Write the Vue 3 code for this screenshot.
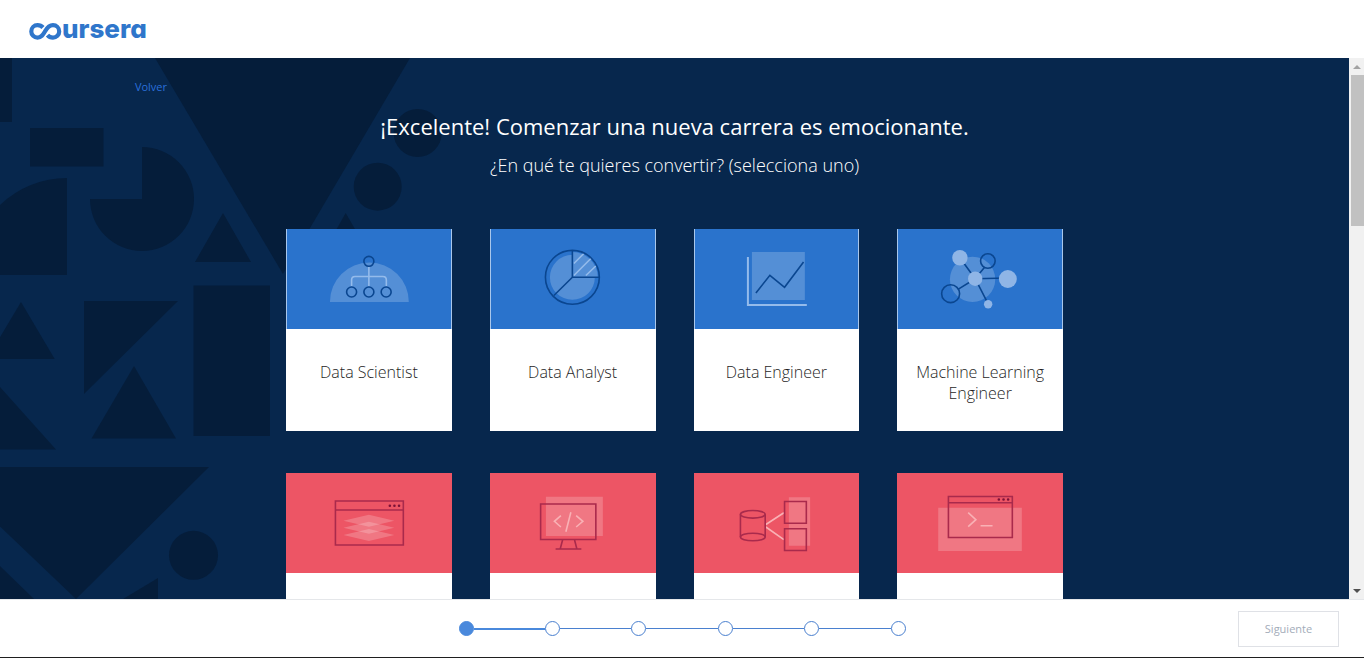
<script setup>
const roles = [
  { name: 'Data Scientist', icon: 'scientist', tone: 'blue' },
  { name: 'Data Analyst', icon: 'analyst', tone: 'blue' },
  { name: 'Data Engineer', icon: 'engineer', tone: 'blue' },
  { name: 'Machine Learning Engineer', icon: 'ml', tone: 'blue' },
  { name: '', icon: 'layers', tone: 'red' },
  { name: '', icon: 'code', tone: 'red' },
  { name: '', icon: 'database', tone: 'red' },
  { name: '', icon: 'terminal', tone: 'red' },
]
const steps = [1, 2, 3, 4, 5, 6]
</script>

<template>
  <div class="page">
    <header class="header">
      <a class="logo" href="#">
        <svg class="logo-mark" viewBox="0 0 33 17" width="33" height="17" aria-hidden="true">
          <path d="M14 4.500C12.400 2.700 10.600 2.200 8.500 2.200a6.200 6.200 0 0 0 0 12.400c4 0 5.500-2.700 7.500-6.200s3.800-6.200 8-6.200a6.200 6.200 0 0 1 0 12.400c-2.400 0-4.200-.900-5.500-2.500" />
        </svg>
        <span class="logo-text">ursera</span>
      </a>
    </header>

    <div class="body">
      <main class="scroller">
        <svg class="shapes" viewBox="0 0 460 541" width="460" height="541" aria-hidden="true">
          <rect x="0" y="0" width="12" height="64" />
          <rect x="30" y="70" width="73.500" height="38.500" />
          <path d="M0 217V147A97 97 0 0 1 67 120V217Z" />
          <path d="M142 141V89A52 52 0 1 1 90 141Z" />
          <path d="M155 0H410L283 216Z" />
          <circle cx="417.700" cy="75" r="24" />
          <circle cx="377.700" cy="128.700" r="24" />
          <path d="M223 155L251 204H195Z" />
          <path d="M345.700 155L374 204H318Z" />
          <path d="M21 244L54.700 301H-13Z" />
          <path d="M84 243H178L84 336Z" />
          <path d="M134 308L176 380.500H91.500Z" />
          <rect x="193.500" y="227.500" width="76.500" height="150.500" />
          <path d="M0 329L56 391.500H0Z" />
          <path d="M0 409H209L76 541L0 468.500Z" />
          <path d="M0 508L34 541H0Z" />
          <circle cx="193.500" cy="497.300" r="24.500" />
          <path d="M158 520V541H123Z" />
        </svg>

        <a class="back" href="#">Volver</a>
        <h1 class="title">¡Excelente! Comenzar una nueva carrera es emocionante.</h1>
        <p class="subtitle">¿En qué te quieres convertir? (selecciona uno)</p>

        <div class="grid">
          <button v-for="role in roles" :key="role.icon" type="button" class="card" :class="role.tone" :aria-label="role.name || role.icon">
            <svg class="art" viewBox="0 0 166 100" aria-hidden="true">
              <g v-if="role.icon === 'scientist'">
                <path class="pale" d="M44 73a39.500 39.500 0 0 1 79 0Z" />
                <path class="light" d="M83 38V57M65.700 57V51q0-3.500 3.500-3.500H97q3.500 0 3.500 3.500V57" />
                <circle class="line" cx="83" cy="32.300" r="5" />
                <circle class="line" cx="65.700" cy="63" r="5" />
                <circle class="line" cx="83" cy="63" r="5" />
                <circle class="line" cx="100.300" cy="63" r="5" />
              </g>
              <g v-else-if="role.icon === 'analyst'">
                <path class="pale" d="M82.500 48.300V23A25.500 25.500 0 0 1 108 48.300H105A22.500 22.500 0 1 1 82.500 25.800Z" />
                <path class="light" d="M84 34.500L94 24.500M84 46.500L101 29.500M96 46.500L106 37" />
                <circle class="line" cx="82.500" cy="48.300" r="27" />
                <path class="line" d="M82.500 21.300V48.300H109.500M82.500 48.300L64 66.500" />
              </g>
              <g v-else-if="role.icon === 'engineer'">
                <path class="pale" d="M58 23H111V71H58Z" />
                <path class="light thick" d="M54 28V76H113" />
                <path class="line" d="M62 64L76 46.300L90.700 58.300L109.700 33" />
              </g>
              <g v-else-if="role.icon === 'ml'">
                <circle class="pale" cx="75.700" cy="50.300" r="22.700" />
                <path class="line" d="M78.300 49.700L63 28.700M78.300 49.700L87.500 38.500M78.300 49.700L111 49M78.300 49.700L61.500 60.200M78.300 49.700L91.300 75" />
                <circle class="line" cx="91" cy="32" r="7.300" />
                <circle class="line" cx="53.700" cy="64.700" r="9" />
                <circle class="dot" cx="63" cy="28.700" r="7.700" />
                <circle class="dot" cx="78.300" cy="49.700" r="7.200" />
                <circle class="dot" cx="111" cy="50" r="9" />
                <circle class="dot" cx="91.300" cy="75.300" r="4.200" />
              </g>
              <g v-else-if="role.icon === 'layers'">
                <path class="pale" d="M57.500 47.700L83 41.700L108.500 47.700L83 53.700Z" />
                <path class="pale" d="M57.500 54.700L83 48.700L108.500 54.700L83 60.700Z" />
                <path class="pale" d="M57.500 62L83 56L108.500 62L83 68Z" />
                <path class="line" d="M49.500 28H117.500V72H49.500ZM49.500 37H117.500" />
                <path class="dots" d="M104 32.700h.01M108.600 32.700h.01M113.200 32.700h.01" />
              </g>
              <g v-else-if="role.icon === 'code'">
                <path class="pale" d="M56 23.700H113V63H56Z" />
                <path class="line" d="M50.700 31H106V66.500H50.700ZM72.700 67L70.300 76M84.700 67L87 76M65.700 76H91.500" />
                <path class="light" d="M71 42.700L64.500 48.300L71 54M81 39.300L76 58.700M86.300 42.700L93 48.300L86.300 54" />
              </g>
              <g v-else-if="role.icon === 'database'">
                <path class="pale" d="M95 24.300H116.300V72.700H95Z" />
                <path class="light" d="M72 51.500L90 39.700M72 54L90 66.700" />
                <path class="line" d="M90.700 28.500H112.500V50.300H90.700ZM90.700 55.700H112.500V77.500H90.700ZM46.500 41.300V64M71.300 41.300V64" />
                <ellipse class="line" cx="58.900" cy="41.300" rx="12.400" ry="3.800" />
                <ellipse class="line" cx="58.900" cy="64" rx="12.400" ry="3.800" />
              </g>
              <g v-else>
                <path class="pale" d="M41.300 34.700H125V78H41.300Z" />
                <path class="line" d="M51.500 23.500H115.500V64.500H51.500ZM51.500 29.700H115.500" />
                <path class="dots" d="M102 26.500h.01M106.700 26.500h.01M111.300 26.500h.01" />
                <path class="light" d="M71.300 39.700L79 46.700L71.300 53.700M83.700 52.800H95.700" />
              </g>
            </svg>
            <span class="card-name">{{ role.name }}</span>
          </button>
        </div>
      </main>

      <div class="scrollbar" aria-hidden="true">
        <svg class="arrow up" viewBox="0 0 15 17"><path d="M4 11L8 7L12 11Z" /></svg>
        <div class="thumb"></div>
        <svg class="arrow down" viewBox="0 0 15 17"><path d="M4 7L8 11L12 7Z" /></svg>
      </div>
    </div>

    <footer class="footer">
      <ol class="steps" aria-label="Progreso">
        <li v-for="step in steps" :key="step" class="step" :class="{ current: step === 1 }"></li>
      </ol>
      <button class="next" type="button" disabled>Siguiente</button>
    </footer>
  </div>
</template>

<style>
body {
  margin: 0;
}
</style>

<style scoped>
.page {
  display: flex;
  flex-direction: column;
  height: 100vh;
  box-sizing: border-box;
  border-bottom: 1px solid #1f1f1f;
  background: #fff;
  font-family: 'Open Sans', 'Noto Sans', sans-serif;
}
.header {
  display: flex;
  align-items: center;
  flex: none;
  height: 58px;
  padding: 0 29px;
}
.logo {
  display: flex;
  align-items: center;
  color: #2f76cb;
  text-decoration: none;
}
.logo-mark {
  flex: none;
  margin-top: 4px;
  fill: none;
  stroke: currentColor;
  stroke-width: 4.200;
}
.logo-text {
  font: 800 26px/30px Inter, Lato, sans-serif;
  font-feature-settings: 'cv11';
}
.body {
  display: flex;
  flex: 1;
  min-height: 0;
}
.scroller {
  position: relative;
  flex: 1;
  overflow: hidden;
  background: #07274d;
  color: #fff;
}
.shapes {
  position: absolute;
  top: 0;
  left: 0;
  fill: #051d3a;
}
.back {
  position: relative;
  display: block;
  width: max-content;
  margin: 20px 0 0 10%;
  font-size: 11px;
  line-height: 18px;
  color: #2a6fdb;
  text-decoration: none;
}
.title,
.subtitle {
  position: relative;
  margin: 0;
  text-align: center;
}
.title {
  margin-top: 15px;
  font-size: 22px;
  font-weight: 400;
  line-height: 30px;
}
.subtitle {
  margin-top: 12px;
  font-size: 18px;
  font-weight: 300;
  line-height: 24px;
}
.grid {
  position: relative;
  display: grid;
  grid-template-columns: repeat(4, 1fr);
  gap: 42px 38px;
  max-width: 777px;
  margin: 52px auto 0;
}
.card {
  display: flex;
  flex-direction: column;
  height: 202px;
  padding: 0;
  border: 0;
  background: #fff;
  font-family: inherit;
  color: #1f1f1f;
}
.art {
  display: block;
  flex: none;
  width: 100%;
  height: 100px;
  fill: none;
  stroke-width: 1.600;
}
.blue .art {
  background: #2a73cc;
  box-shadow: inset 1px 0 #a9c7eb, inset -1px 0 #a9c7eb;
}
.red .art {
  background: #ed5565;
}
.pale {
  fill: #fff;
  fill-opacity: 0.2;
}
.blue .line {
  stroke: #0a4690;
}
.red .line {
  stroke: #a92a4c;
}
.blue .light {
  stroke: #94bbeb;
}
.light.thick {
  stroke-width: 2;
}
.red .light {
  stroke: #f9b1b5;
}
.dot {
  fill: #8fb5e6;
}
.dots {
  stroke: #7d1238;
  stroke-width: 2.600;
  stroke-linecap: round;
}
.card-name {
  width: 100%;
  box-sizing: border-box;
  padding: 33px 16px 0;
  font-size: 16px;
  font-weight: 300;
  line-height: 21px;
  text-align: center;
}
.scrollbar {
  display: flex;
  flex-direction: column;
  flex: none;
  width: 15px;
  background: #f1f1f1;
}
.arrow {
  flex: none;
  width: 15px;
  height: 17px;
}
.up {
  fill: #a3a3a3;
}
.down {
  margin-top: auto;
  fill: #505050;
}
.thumb {
  height: 28%;
  margin-left: 2px;
  background: #c1c1c1;
}
.footer {
  position: relative;
  display: flex;
  align-items: center;
  justify-content: center;
  flex: none;
  height: 57px;
  border-top: 1px solid #e5e7ea;
}
.steps {
  display: flex;
  width: 447px;
  margin: 0;
  padding: 0;
  list-style: none;
}
.step {
  display: flex;
  align-items: center;
  flex: 1;
}
.step::before {
  content: '';
  flex: none;
  box-sizing: border-box;
  width: 15px;
  height: 15px;
  border: 1px solid #4a80cf;
  border-radius: 50%;
}
.step::after {
  content: '';
  flex: 1;
  height: 1px;
  background: #4a80cf;
}
.step:last-child {
  flex: none;
}
.step:last-child::after {
  display: none;
}
.current::before {
  border-color: #4a89dc;
  background: #4a89dc;
}
.current::after {
  height: 2px;
  background: #4a89dc;
}
.next {
  position: absolute;
  right: 25px;
  width: 101px;
  height: 36px;
  border: 1px solid #dfe1e6;
  background: #fff;
  font-family: inherit;
  font-size: 11px;
  color: #a3acb9;
}
</style>
